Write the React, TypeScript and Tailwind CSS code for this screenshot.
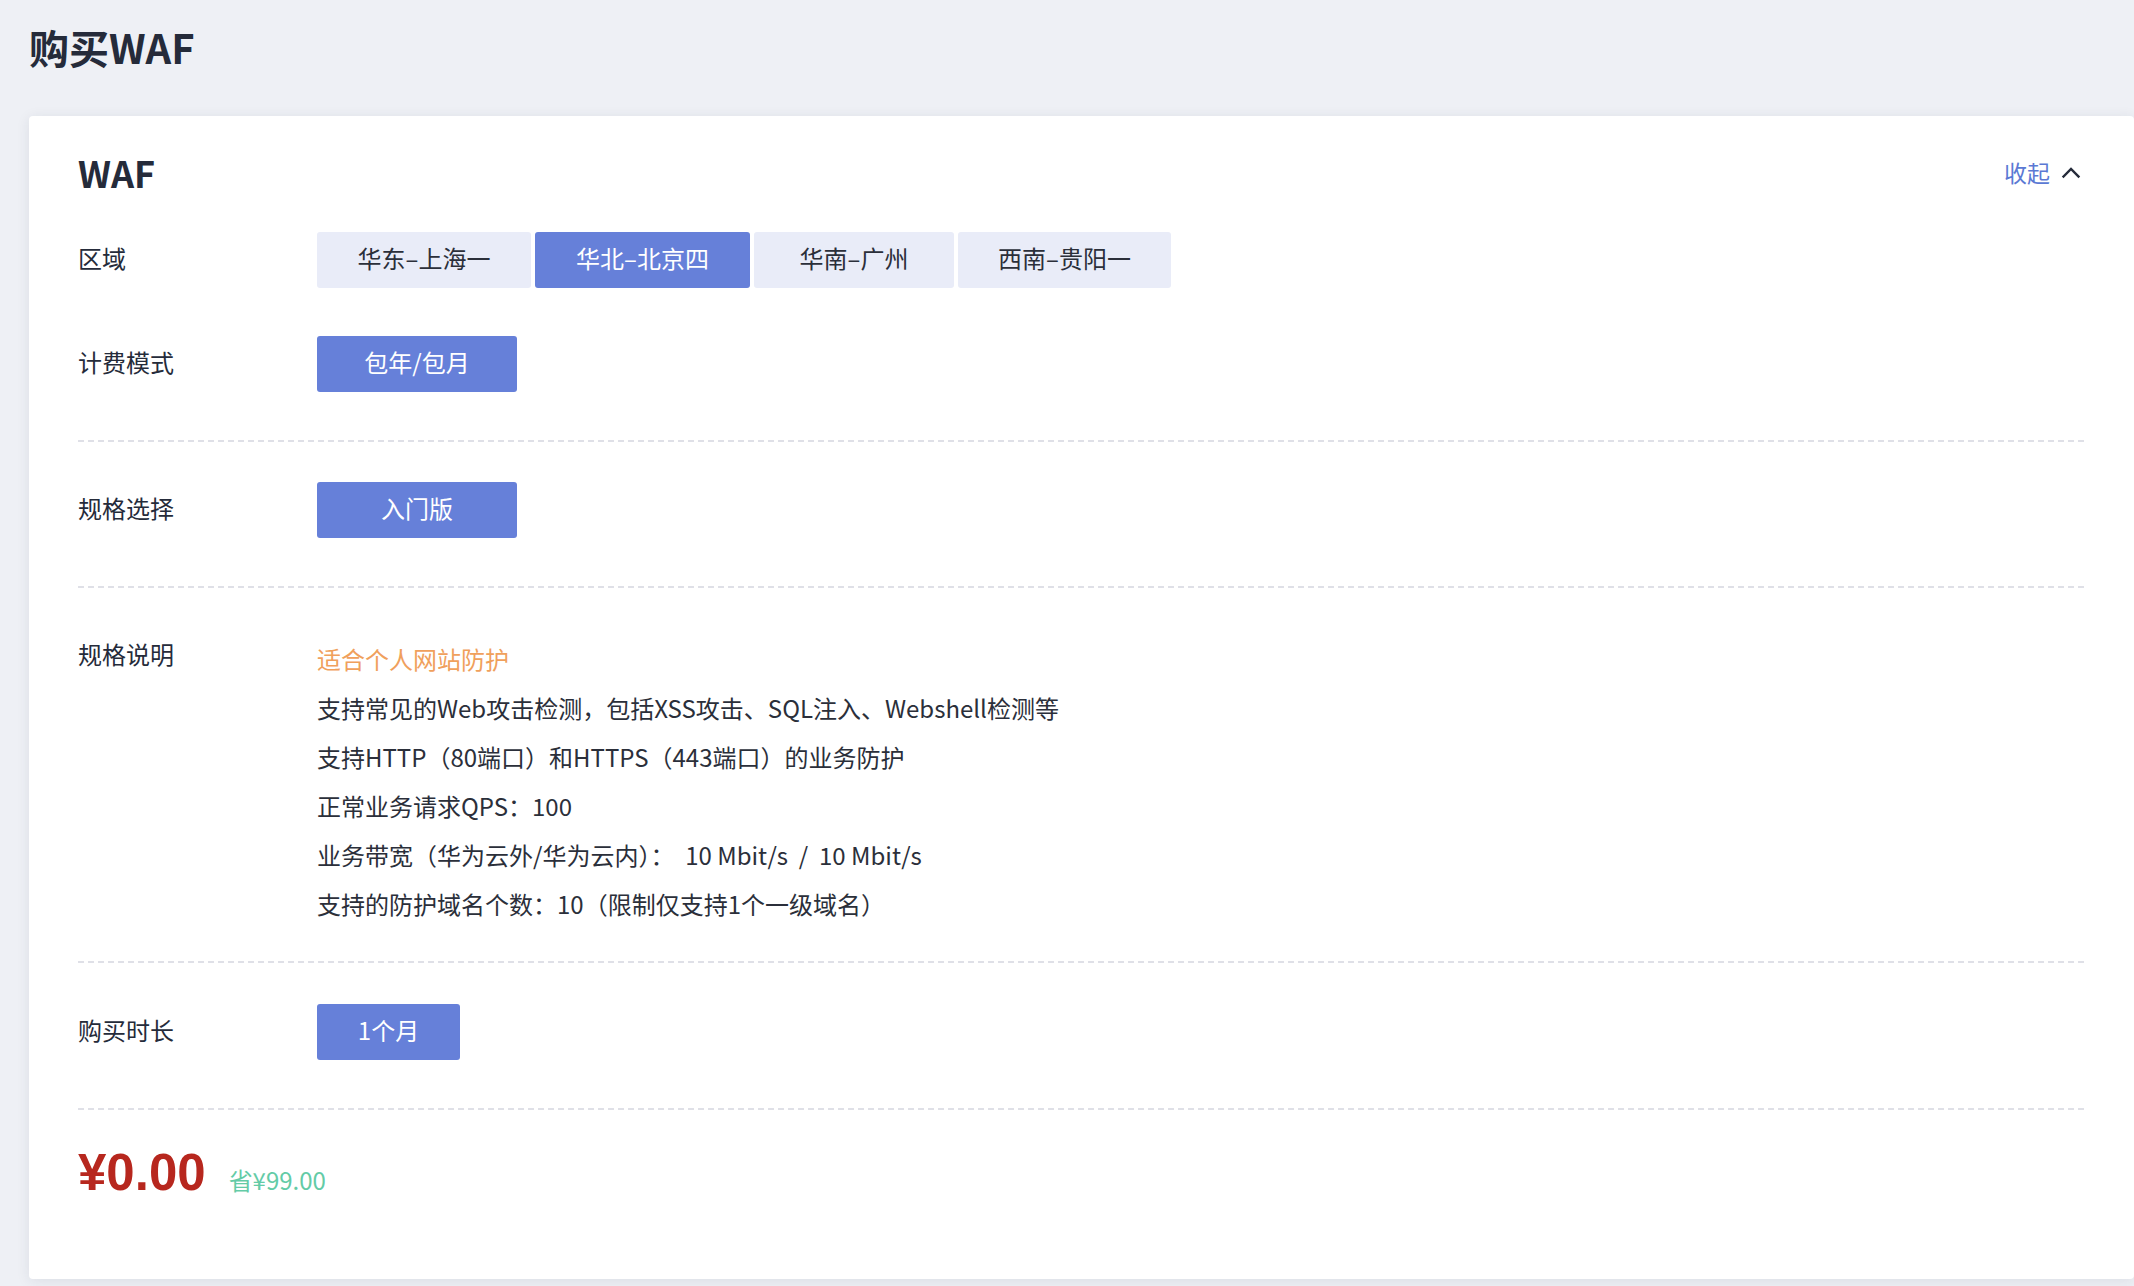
import React from "react";

function Dash() {
  return (
    <div className="h-[2px] w-full bg-[linear-gradient(to_right,#dfe0e7_6px,transparent_6px)] bg-[length:10px_2px] bg-repeat-x" />
  );
}

function Label({ children, top }: { children: React.ReactNode; top?: boolean }) {
  return (
    <div className={"w-[239px] shrink-0 text-[24px] leading-[40px] text-[#252b3a] " + (top ? "" : "pb-[4px]")}>
      {children}
    </div>
  );
}

function Btn({ children, active, w }: { children: React.ReactNode; active?: boolean; w: string }) {
  return (
    <div
      className={
        "flex h-[56px] items-center justify-center rounded-[3px] pb-[4px] text-[24px] " +
        w +
        " " +
        (active ? "bg-[#6680d9] text-white" : "bg-[#e9ecf8] text-[#2b2f3a]")
      }
    >
      {children}
    </div>
  );
}

export default function App() {
  const regions = [
    { t: "华东–上海一", w: "w-[214px]", a: false },
    { t: "华北–北京四", w: "w-[215px]", a: true },
    { t: "华南–广州", w: "w-[200px]", a: false },
    { t: "西南–贵阳一", w: "w-[213px]", a: false },
  ];
  const specs = [
    "支持常见的Web攻击检测，包括XSS攻击、SQL注入、Webshell检测等",
    "支持HTTP（80端口）和HTTPS（443端口）的业务防护",
    "正常业务请求QPS：100",
    "业务带宽（华为云外/华为云内）：\u00a0 10 Mbit/s  /  10 Mbit/s",
    "支持的防护域名个数：10（限制仅支持1个一级域名）",
  ];
  return (
    <div className="min-h-[1286px] bg-[#eef0f5] font-['Noto_Sans_CJK_SC','Noto_Sans',sans-serif] text-[#252b3a]">
      <div className="h-[116px] pl-[29px] pt-[19px]">
        <h1 className="text-[40px] font-semibold leading-[56px] text-[#252b3a]">购买WAF</h1>
      </div>
      <div className="ml-[29px] rounded-[4px] bg-white pl-[49px] pr-[48px] pt-[31px] shadow-[0_2px_14px_rgba(30,40,70,0.09)]">
        {/* section 1 */}
        <div className="pb-[48px]">
          <div className="flex h-[50px] items-center justify-between">
            <div className="text-[36px] font-semibold leading-[50px] text-[#252b3a]">WAF</div>
            <div className="flex items-center pr-[5px]">
              <span className="text-[23px] leading-[32px] text-[#5b79d4]">收起</span>
              <svg className="ml-[11px]" width="20" height="20" viewBox="0 0 20 20" fill="none">
                <path d="M2.5 14.5L10 7l7.5 7.5" stroke="#252b3a" strokeWidth="2.4" strokeLinecap="square" />
              </svg>
            </div>
          </div>
          <div className="mt-[35px] flex items-center">
            <Label>区域</Label>
            <div className="flex gap-[4px]">
              {regions.map((r) => (
                <Btn key={r.t} w={r.w} active={r.a}>
                  {r.t}
                </Btn>
              ))}
            </div>
          </div>
          <div className="mt-[48px] flex items-center">
            <Label>计费模式</Label>
            <Btn w="w-[200px]" active>
              包年/包月
            </Btn>
          </div>
        </div>
        <Dash />
        {/* spec select */}
        <div className="flex items-center pb-[48px] pt-[40px]">
          <Label>规格选择</Label>
          <Btn w="w-[200px]" active>
            入门版
          </Btn>
        </div>
        <Dash />
        {/* spec desc */}
        <div className="flex items-start pb-[33px] pt-[46px]">
          <Label top>规格说明</Label>
          <div className="whitespace-pre text-[24px] leading-[49px]">
            <div className="text-[#f0a05c]">适合个人网站防护</div>
            {specs.map((s) => (
              <div key={s} className="text-[#2b2f3a]">
                {s}
              </div>
            ))}
          </div>
        </div>
        <Dash />
        {/* duration */}
        <div className="flex items-center pb-[48px] pt-[41px]">
          <Label>购买时长</Label>
          <Btn w="w-[143px]" active>
            1个月
          </Btn>
        </div>
        <Dash />
        {/* price */}
        <div className="flex items-baseline gap-[23px] pb-[74px] pt-[31px]">
          <span className="font-['Liberation_Sans',sans-serif] text-[51px] font-bold leading-[64px] text-[#b7271e]">
            ¥0.00
          </span>
          <span className="text-[24px] text-[#63cba6]">省¥99.00</span>
        </div>
      </div>
    </div>
  );
}
